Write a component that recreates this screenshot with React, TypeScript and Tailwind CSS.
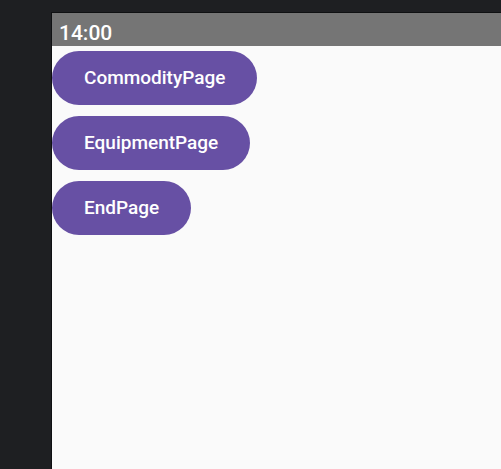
export default function App() {
  const pages = ["CommodityPage", "EquipmentPage", "EndPage"];
  return (
    <div className="h-[469px] w-[501px] overflow-hidden bg-[#1e1f22] pt-[12px] pl-[51px] font-['Roboto',sans-serif]">
      <div className="h-full border-t border-l border-[#0f1012] bg-[#fafafa]">
        <div className="flex h-[33px] items-end bg-[#757575] px-[7px] pb-[2px] text-[21px] leading-none font-medium text-white">
          14:00
        </div>
        <div className="flex flex-col items-start gap-[11px] pt-[5px]">
          {pages.map((p) => (
            <button
              key={p}
              type="button"
              className="h-[54px] rounded-full bg-[#6750a4] px-[32px] text-[19px] font-medium text-white"
            >
              {p}
            </button>
          ))}
        </div>
      </div>
    </div>
  );
}
